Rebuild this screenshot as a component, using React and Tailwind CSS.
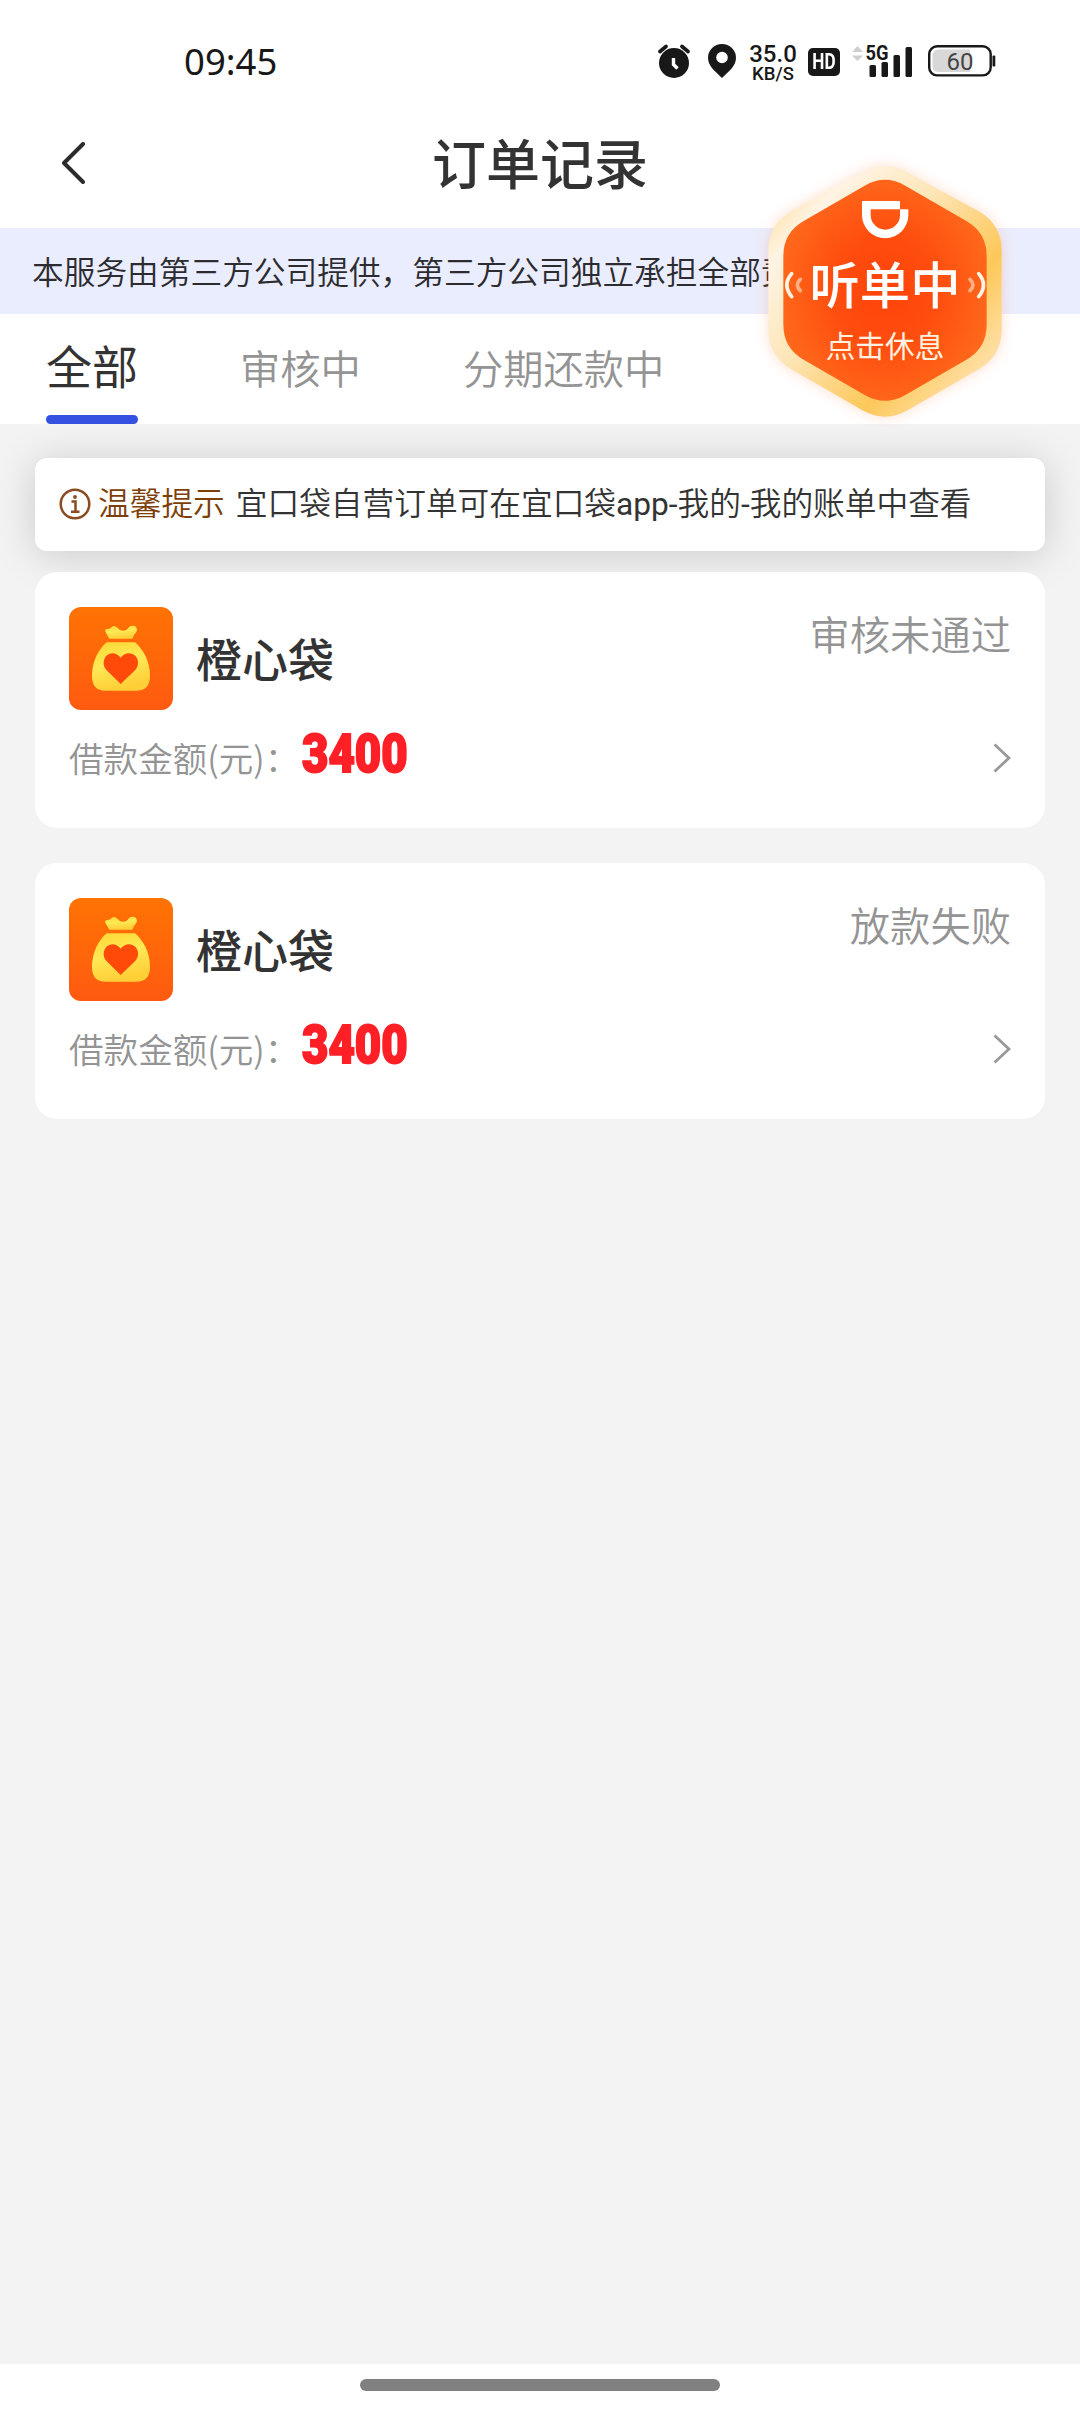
import React, { useState } from 'react';

const tabs = ['全部', '审核中', '分期还款中'];

const orders = [
  { id: 1, name: '橙心袋', amount: 3400, status: '审核未通过' },
  { id: 2, name: '橙心袋', amount: 3400, status: '放款失败' },
];

function StatusBar() {
  return (
    <div className="flex h-[122px] items-center justify-between pl-[184px] pr-[84px] text-[#181818]">
      <span className="font-['Noto_Sans',sans-serif] text-[36.500px] leading-none">09:45</span>
      <div className="flex items-center">
        {/* alarm */}
        <svg width="32" height="34" viewBox="0 0 32 34">
          <circle cx="16" cy="19" r="15" fill="#181818" />
          <path d="M2 7.5L8 2.5M30 7.5L24 2.5" stroke="#181818" strokeWidth="3.6" strokeLinecap="round" />
          <path d="M15.5 14V20.5L19.5 24.5" stroke="#fff" strokeWidth="3.4" fill="none" />
        </svg>
        {/* location */}
        <svg className="ml-[18px]" width="28" height="34" viewBox="0 0 28 34">
          <path d="M14 0A14 14 0 0 0 0 14C0 22 7 27 14 34C21 27 28 22 28 14A14 14 0 0 0 14 0Z" fill="#181818" />
          <circle cx="14" cy="13.5" r="5.8" fill="#fff" />
        </svg>
        <div className="ml-3 mt-[5px] flex w-[50px] flex-col items-center font-['Roboto',sans-serif] font-medium">
          <span className="text-[24px] leading-[21px]">35.0</span>
          <span className="text-[18.500px] leading-[19px]">KB/S</span>
        </div>
        <div className="ml-[10px] mt-[2px] flex h-7 w-8 items-center justify-center rounded-[5px] bg-[#181818] font-['Roboto',sans-serif] text-[22px] font-bold leading-none text-white">
          <span className="scale-x-[0.78]">HD</span>
        </div>
        {/* signal */}
        <svg className="ml-3 overflow-visible" width="61" height="34" viewBox="0 0 61 34">
          <path d="M0 8L5.5 2L11 8ZM0 11.5L5.5 17L11 11.5Z" fill="#cfcfcf" />
          <g fill="#181818">
            <text x="13.5" y="16" fontSize="20" fontWeight="700" fontFamily="Roboto, sans-serif" textLength="23" lengthAdjust="spacingAndGlyphs">5G</text>
            <rect x="17.5" y="21" width="6.5" height="12" rx="1.5" />
            <rect x="29.5" y="18" width="6.5" height="15" rx="1.5" />
            <rect x="41.5" y="11" width="6.5" height="22" rx="1.5" />
            <rect x="53.5" y="3" width="6.5" height="30" rx="1.5" />
          </g>
        </svg>
        {/* battery */}
        <svg className="ml-[15px] overflow-visible" width="68" height="32" viewBox="0 0 68 32">
          <rect x="1.2" y="1.2" width="61.5" height="29.2" rx="8" fill="none" stroke="#181818" strokeWidth="2.4" />
          <path d="M11 4.5H42V27H11Q4.5 27 4.5 21V10.5Q4.5 4.5 11 4.5Z" fill="#d8d8d8" />
          <rect x="64.5" y="10.5" width="2.8" height="11" rx="1" fill="#181818" />
          <text x="32" y="24.5" fontSize="24" textAnchor="middle" fill="#444" fontFamily="Roboto, sans-serif">60</text>
        </svg>
      </div>
    </div>
  );
}

function MoneyBag() {
  return (
    <svg className="h-[103px] w-[104px]" viewBox="0 0 312 309">
      <defs>
        <linearGradient id="tile" x1="0" y1="0" x2="0" y2="1">
          <stop offset="0" stopColor="#ff7303" />
          <stop offset="1" stopColor="#ff5a10" />
        </linearGradient>
        <linearGradient id="bag" x1="0" y1="0" x2="0.3" y2="1">
          <stop offset="0" stopColor="#ffd634" />
          <stop offset="0.5" stopColor="#ffe955" />
          <stop offset="1" stopColor="#ffcf38" />
        </linearGradient>
      </defs>
      <rect width="312" height="309" rx="36" fill="url(#tile)" />
      <path d="M121 95L109 74Q106 66 115 66Q124 66 129 59Q137 54 145 62Q152 71 162 71Q174 71 180 60Q187 54 197 57Q206 63 203 73Q199 79 195 84L190 95Z" fill="url(#bag)" />
      <path d="M113 106H198C220 124 243 161 243 206C243 236 229 251 201 251H110C82 251 69 236 69 206C69 161 91 124 113 106Z" fill="url(#bag)" />
      <path d="M155 231L113 190C100 176 102 156 114 145C127 134 144 137 155 152C166 137 184 134 197 145C210 156 211 176 198 190Z" fill="#ff4a0a" />
    </svg>
  );
}

function OrderCard({ order }) {
  return (
    <div className="relative h-64 rounded-[22px] bg-white px-[34px] pt-[35px]">
      <div className="flex justify-between">
        <div className="flex items-center">
          <MoneyBag />
          <span className="mb-[4px] ml-[23px] text-[46px] font-medium leading-none">{order.name}</span>
        </div>
        <span className="mt-[5px] text-[40.300px] font-[350] leading-[42px] text-[#949494]">{order.status}</span>
      </div>
      <div className="mt-5 flex h-[56px] items-center justify-between">
        <div className="flex items-center">
          <span className="mb-[2px] w-[233px] whitespace-nowrap text-[34.600px] font-[350] leading-none text-[#949494]">借款金额(元)：</span>
          <span className="mb-[7px] origin-left scale-x-[0.86] font-['Roboto',sans-serif] text-[53px] font-black leading-none text-[#ff1f26] [-webkit-text-stroke:2px_#ff1f26]">
            {order.amount}
          </span>
        </div>
        <svg width="18" height="30" viewBox="0 0 18 30" fill="none">
          <path d="M1.5 1.5L16 15L1.5 28.5" stroke="#999" strokeWidth="2.8" />
        </svg>
      </div>
    </div>
  );
}

// Floating hexagon badge that hovers over the page
function FloatingBadge() {
  return (
    <svg
      className="absolute left-[740px] top-[150px] z-20 h-[280px] w-[300px] overflow-visible"
      viewBox="0 0 900 840"
      fontFamily="Noto Sans CJK SC, sans-serif"
    >
      <defs>
        <linearGradient id="rim" x1="0.1" y1="0.1" x2="0.9" y2="0.85">
          <stop offset="0" stopColor="#fde3ae" />
          <stop offset="0.12" stopColor="#fff4e4" />
          <stop offset="0.4" stopColor="#fde6b8" />
          <stop offset="0.75" stopColor="#fdc85a" />
          <stop offset="1" stopColor="#fee0a8" />
        </linearGradient>
        <radialGradient id="core" cx="0.5" cy="0.5" r="0.55">
          <stop offset="0" stopColor="#ff430a" />
          <stop offset="0.45" stopColor="#ff4d0f" />
          <stop offset="1" stopColor="#ff6a1c" />
        </radialGradient>
        <filter id="glow" x="-20%" y="-20%" width="140%" height="140%">
          <feGaussianBlur stdDeviation="20" />
        </filter>
      </defs>
      <path d="M366 68Q435 28 504 68L716 184Q785 224 785 304V538Q785 618 716 658L504 780Q435 820 366 780L154 658Q85 618 85 538V304Q85 224 154 184Z" fill="#ff8a50" opacity="0.28" filter="url(#glow)" />
      <path d="M366 68Q435 28 504 68L716 184Q785 224 785 304V538Q785 618 716 658L504 780Q435 820 366 780L154 658Q85 618 85 538V304Q85 224 154 184Z" fill="url(#rim)" />
      <path d="M374 107Q435 72 496 107L679 213Q740 248 740 318V524Q740 594 679 629L496 735Q435 770 374 735L191 629Q130 594 130 524V318Q130 248 191 213Z" fill="url(#core)" />
      <path fillRule="evenodd" d="M366 153H480V178H505V195A69.5 69.5 0 0 1 366 195ZM392 178V195A44 44 0 0 0 480 195V178Z" fill="#fff" />
      <g fill="none" stroke="#fff3e4" strokeWidth="11" strokeLinecap="round">
        <path d="M155 371Q126 405 155 440M716 371Q745 405 716 440" />
        <path d="M181 388Q163 405 181 422M690 388Q708 405 690 422" opacity="0.55" />
      </g>
      <text x="435" y="461" fontSize="151" fontWeight="500" textAnchor="middle" fill="#fff">听单中</text>
      <text x="435" y="621" fontSize="89" textAnchor="middle" fill="#fff2e0">点击休息</text>
    </svg>
  );
}

export default function App() {
  const [active, setActive] = useState(0);

  return (
    <div className="relative flex h-[2412px] w-[1080px] flex-col overflow-hidden bg-[#f3f3f3] font-['Noto_Sans_CJK_SC',sans-serif] text-[#333]">
      <header className="relative z-10 bg-white">
        <StatusBar />
        <div className="flex h-[106px] items-center px-[61px] pb-[24px]">
          <svg width="24" height="42" viewBox="0 0 24 42" fill="none">
            <path d="M22 2L3 21L22 40" stroke="#2b2b2b" strokeWidth="4" strokeLinecap="round" strokeLinejoin="round" />
          </svg>
          <h1 className="mb-[2px] flex-1 pr-6 text-center text-[54px] font-medium leading-none">订单记录</h1>
        </div>
        <p className="h-[86px] overflow-hidden whitespace-nowrap bg-[#eaedfd] pl-8 text-[31.700px] font-[350] leading-[84px] text-[#2b2b30]">
          本服务由第三方公司提供，第三方公司独立承担全部责任
        </p>
        <nav className="flex h-[110px] gap-[102px] pl-[46px]">
          {tabs.map((tab, i) => (
            <button
              key={tab}
              onClick={() => setActive(i)}
              className={`flex flex-col justify-between ${i === active ? 'text-[46px] text-[#333]' : 'text-[40.300px] font-[350] text-[#949494]'}`}
            >
              <span className={i === active ? 'leading-[101px]' : 'leading-[105px]'}>{tab}</span>
              {i === active && <span className="h-[9px] w-full shrink-0 rounded-full bg-[#3451e1]" />}
            </button>
          ))}
        </nav>
      </header>

      <main className="flex-1 px-[35px] pt-[34px]">
        <div className="flex h-[93px] items-center rounded-xl bg-white pl-6 font-['Roboto','Noto_Sans_CJK_SC',sans-serif] text-[31.700px] leading-none shadow-[0_4px_40px_rgba(0,0,0,0.17)]">
          <svg className="mb-[2px]" width="32" height="32" viewBox="0 0 32 32" fill="none">
            <circle cx="16" cy="16" r="14.3" stroke="#8a4b22" strokeWidth="2.5" />
            <path d="M12.5 13.5H16.5V23.5M12 23.8H20.5" stroke="#8a4b22" strokeWidth="2.5" />
            <circle cx="16" cy="9" r="1.9" fill="#8a4b22" />
          </svg>
          <span className="ml-[7px] font-[350] text-[#7d3f08]">温馨提示</span>
          <span className="ml-[11px] font-[350]">
            宜口袋自营订单可在宜口袋<span className="font-normal">app-</span>我的<span className="font-normal">-</span>我的账单中查看
          </span>
        </div>
        <div className="mt-[21px] flex flex-col gap-[35px]">
          {orders.map((order) => (
            <OrderCard key={order.id} order={order} />
          ))}
        </div>
      </main>

      <footer className="flex h-12 justify-center bg-white pt-[15px]">
        <div className="h-3 w-[360px] rounded-full bg-[#808080]" />
      </footer>

      <FloatingBadge />
    </div>
  );
}
